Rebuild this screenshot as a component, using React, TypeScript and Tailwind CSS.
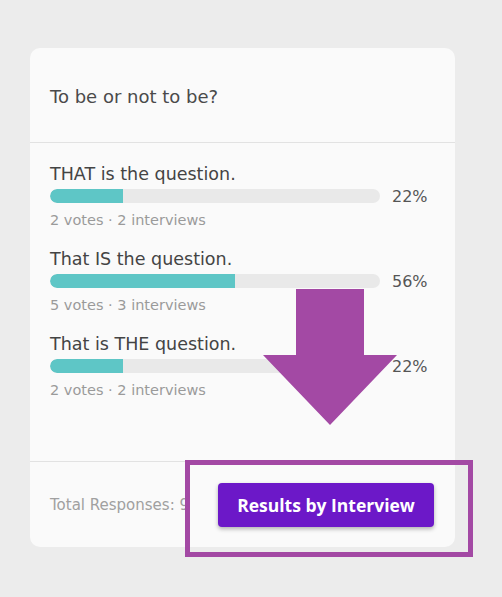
const options = [
  { label: 'THAT is the question.', pct: 22, votes: 2, interviews: 2 },
  { label: 'That IS the question.', pct: 56, votes: 5, interviews: 3 },
  { label: 'That is THE question.', pct: 22, votes: 2, interviews: 2 },
];

export default function App() {
  return (
    <div className="relative min-h-[597px] w-[502px] bg-[#ececec] pt-[48px] pl-[30px] font-['DejaVu_Sans',sans-serif]">
      <div className="w-[425px] rounded-[10px] bg-[#fafafa]">
        {/* Question */}
        <div className="flex h-[95px] items-center border-b border-[#e2e2e2] px-[20px] pt-[2px]">
          <h2 className="text-[18px] text-[#4a4a4a]">To be or not to be?</h2>
        </div>

        {/* Options */}
        <div className="flex flex-col gap-[19px] px-[20px] pt-[19px] pb-[63px]">
          {options.map((o, i) => (
            <div key={i}>
              <div className="h-[22px] text-[17.5px] leading-[24px] text-[#444]">{o.label}</div>
              <div className="mt-[5px] flex h-[14px] items-center gap-[12px]">
                <div className="h-[14px] w-[330px] overflow-hidden rounded-full bg-[#e9e9e9]">
                  <div className="h-full rounded-l-full bg-[#5ec6c6]" style={{ width: `${o.pct}%` }} />
                </div>
                <span className="translate-y-[1px] text-[16px] leading-[18px] text-[#555]">{o.pct}%</span>
              </div>
              <div className="mt-[5px] h-[20px] text-[14.5px] leading-[24px] text-[#9a9a9a]">
                {o.votes} votes · {o.interviews} interviews
              </div>
            </div>
          ))}
        </div>

        {/* Footer */}
        <div className="relative flex h-[86px] items-center border-t border-[#e2e2e2] pl-[20px] pr-[21px] pt-[2px]">
          <span className="whitespace-nowrap text-[15px] text-[#a0a0a0]">Total Responses: 9</span>
          <button className="absolute right-[21px] top-[21px] h-[44px] w-[216px] rounded-[4px] bg-[#6c18c8] font-['Open_Sans',sans-serif] text-[17.5px] font-bold text-white shadow-[0_2px_4px_rgba(0,0,0,0.3)]">
            Results by Interview
          </button>
        </div>
      </div>

      {/* Annotation overlay */}
      <svg className="pointer-events-none absolute left-0 top-0" width="502" height="597">
        <polygon points="296,289 364,289 364,355 397,355 330,425 263,355 296,355" fill="#a349a4" />
        <rect x="187.5" y="462.5" width="283" height="92" fill="none" stroke="#a349a4" strokeWidth="5" />
      </svg>
    </div>
  );
}
